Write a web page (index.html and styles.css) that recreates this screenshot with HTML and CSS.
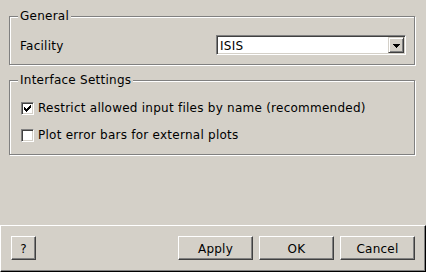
FILE: index.html
```html
<!DOCTYPE html>
<html>
<head>
<meta charset="utf-8">
<link rel="stylesheet" href="styles.css">
</head>
<body>
<div class="dialog">
  <div class="content">
    <div class="group group-general">
      <span class="legend">General</span>
      <div class="facility-row">
        <span class="label">Facility</span>
        <div class="combo">
          <span class="combo-text">ISIS</span>
          <span class="combo-btn">
            <svg width="7" height="4" viewBox="0 0 7 4" shape-rendering="crispEdges"><path d="M0 0H7V1H6V2H5V3H4V4H3V3H2V2H1V1H0Z" fill="#000"/></svg>
          </span>
        </div>
      </div>
    </div>
    <div class="group group-interface">
      <span class="legend">Interface Settings</span>
      <label class="check-row">
        <span class="box">
          <svg width="7" height="7" viewBox="0 0 7 7" shape-rendering="crispEdges"><path d="M6 0H7V3H6V4H5V5H4V6H3V7H2V6H1V5H0V2H1V3H2V4H3V3H4V2H5V1H6Z" fill="#000"/></svg>
        </span>
        <span>Restrict allowed input files by name (recommended)</span>
      </label>
      <label class="check-row">
        <span class="box"></span>
        <span>Plot error bars for external plots</span>
      </label>
    </div>
  </div>
  <div class="footer">
    <button class="btn btn-help">?</button>
    <div class="spacer"></div>
    <button class="btn">Apply</button>
    <button class="btn">OK</button>
    <button class="btn">Cancel</button>
  </div>
</div>
</body>
</html>
```

FILE: styles.css
```css
html, body {
  margin: 0;
  padding: 0;
  background: #d4d0c8;
}
body {
  width: 426px;
  height: 272px;
  overflow: hidden;
  font-family: "DejaVu Sans", sans-serif;
  font-size: 12px;
  line-height: 14px;
  letter-spacing: 0.25px;
  color: #000;
}
.dialog {
  width: 426px;
  height: 272px;
  display: flex;
  flex-direction: column;
}
.content {
  padding: 16px 11px 0 9px;
  flex: 1;
}
.group {
  position: relative;
  border: 1px solid #808080;
  box-shadow: 1px 1px 0 #fff, inset 1px 1px 0 #fff;
  box-sizing: border-box;
}
.group-general {
  height: 49px;
  padding: 18px 8px 0 10px;
}
.group-interface {
  margin-top: 15px;
  height: 75px;
  padding: 19px 8px 0 11px;
}
.legend {
  position: absolute;
  top: -8px;
  left: 8px;
  padding: 0 2px;
  background: #d4d0c8;
  white-space: nowrap;
}
.facility-row {
  display: flex;
  align-items: center;
  height: 20px;
}
.label {
  flex: 1;
  padding-top: 1px;
}
.combo {
  width: 190px;
  height: 20px;
  box-sizing: border-box;
  display: flex;
  align-items: center;
  background: #fff;
  border: 1px solid;
  border-color: #808080 #fff #fff #808080;
  box-shadow: inset 1px 1px 0 #404040, inset -1px -1px 0 #d4d0c8;
  padding: 1px;
}
.combo-text {
  flex: 1;
  padding-left: 2px;
  padding-top: 1px;
}
.combo-btn {
  width: 16px;
  height: 16px;
  box-sizing: border-box;
  background: #d4d0c8;
  border: 1px solid;
  border-color: #d4d0c8 #404040 #404040 #d4d0c8;
  box-shadow: inset 1px 1px 0 #fff, inset -1px -1px 0 #808080;
  display: flex;
  align-items: center;
  justify-content: center;
}
.combo-btn svg {
  display: block;
  margin-top: 1px;
}
.check-row {
  display: flex;
  align-items: center;
  gap: 4px;
  height: 16px;
  margin-bottom: 11px;
  white-space: nowrap;
}
.box {
  width: 13px;
  height: 13px;
  box-sizing: border-box;
  flex: none;
  background: #fff;
  border: 1px solid;
  border-color: #808080 #fff #fff #808080;
  box-shadow: inset 1px 1px 0 #404040, inset -1px -1px 0 #d4d0c8;
  display: flex;
  align-items: center;
  justify-content: center;
}
.box svg {
  display: block;
}
.footer {
  height: 47px;
  box-sizing: border-box;
  border: 1px solid;
  border-color: #fff #000 #000 #fff;
  box-shadow: inset -1px -1px 0 #808080;
  display: flex;
  align-items: flex-start;
  gap: 6px;
  padding: 10px 10px 0 10px;
}
.spacer {
  flex: 1;
}
.btn {
  width: 75px;
  height: 24px;
  box-sizing: border-box;
  margin: 0;
  padding: 1px 0 0 0;
  font-family: "DejaVu Sans", sans-serif;
  font-size: 12px;
  letter-spacing: 0.25px;
  color: #000;
  background: #d4d0c8;
  border: 1px solid;
  border-color: #fff #404040 #404040 #fff;
  box-shadow: inset -1px -1px 0 #808080;
  border-radius: 0;
}
.btn-help {
  width: 25px;
}
```
